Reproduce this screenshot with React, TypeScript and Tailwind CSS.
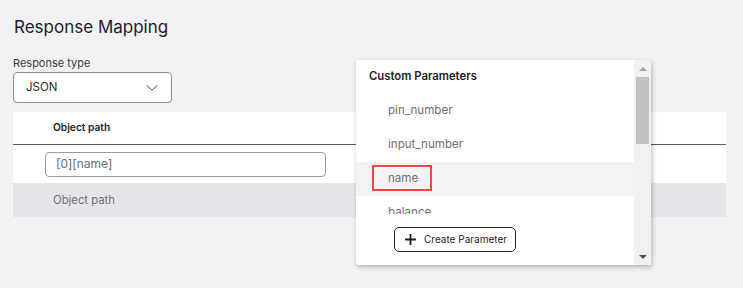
const params = ['pin_number', 'input_number', 'name', 'balance'];

const ParamDropdown = () => {
  return (
    <div className="absolute left-[356px] top-[60px] flex h-[205px] w-[295px] rounded-[3px] bg-white shadow-[1px_2px_5px_rgba(0,0,0,0.28)]">
      <div className="flex flex-1 flex-col">
        <div className="flex h-[34px] items-center pl-[13px] pb-[1px] text-[11.3px] font-semibold text-[#1c1c28]">
          Custom Parameters
        </div>
        <div className="h-[120px] overflow-hidden">
          {params.map(p => (
            <div
              key={p}
              className={`relative flex h-[34px] items-center pl-[32px] text-[11.6px] text-[#6e6e78] ${
                p === 'name' ? 'bg-[#f3f3f4]' : ''
              }`}
            >
              {p}
              {p === 'name' && (
                <div className="absolute left-[16px] top-[3px] h-[26px] w-[60px] border-2 border-[#f24646]" />
              )}
            </div>
          ))}
        </div>
        <div className="flex flex-1 items-center pl-[38px]">
          <button className="flex h-[25px] w-[122px] items-center gap-[8px] rounded-[5px] border border-[#222] bg-white pl-[10px] text-[10px] text-[#1c1c28]">
            <svg width="11" height="11" viewBox="0 0 11 11">
              <path d="M5.5 0v11M0 5.5h11" stroke="#1c1c28" strokeWidth="1.8" />
            </svg>
            Create Parameter
          </button>
        </div>
      </div>
      <div className="flex w-[17px] flex-col items-center bg-[#f1f1f1]">
        <div className="flex h-[17px] items-center justify-center">
          <div className="h-0 w-0 border-x-[4px] border-b-[4px] border-x-transparent border-b-[#a3a3a3]" />
        </div>
        <div className="h-[67px] w-[13px] bg-[#c1c1c1]" />
        <div className="flex-1" />
        <div className="flex h-[17px] items-center justify-center">
          <div className="h-0 w-0 border-x-[4px] border-t-[4px] border-x-transparent border-t-[#505050]" />
        </div>
      </div>
    </div>
  );
};

export default function App() {
  return (
    <div
      className="relative h-[288px] w-[743px] bg-[#f2f2f4] pl-[13px] pt-[15px]"
      style={{ fontFamily: 'Inter, "Noto Sans", sans-serif' }}
    >
      <h1 className="ml-[1px] text-[17px] leading-[24px] text-[#1c1c28]">Response Mapping</h1>
      <div className="mt-[17px] text-[11px] leading-[14px] text-[#3a3a44]">Response type</div>
      <div className="mt-[2px] flex h-[31px] w-[159px] items-center justify-between rounded-[4px] border border-[#8c8c94] bg-white pl-[12px] pr-[13px] text-[11.5px] text-[#2a2a34]">
        JSON
        <svg width="12" height="6" viewBox="0 0 12 6">
          <path d="M0.5 0.5L6 5L11.5 0.5" fill="none" stroke="#555" strokeWidth="1" />
        </svg>
      </div>
      <div className="mt-[9px] w-[713px] bg-white">
        <div className="flex h-[33px] items-center border-b border-[#5c5c64] pl-[40px] text-[10.2px] font-semibold text-[#1c1c28]">
          Object path
        </div>
        <div className="flex h-[38px] items-center pl-[32px]">
          <div className="flex h-[25px] w-[281px] items-center rounded-[4px] border border-[#9a9aa2] pl-[10px] text-[12px] text-[#6e6e78]">
            [0][name]
          </div>
        </div>
        <div className="flex h-[34px] items-center bg-[#e6e6ea] pl-[40px] text-[11.3px] text-[#6e6e78]">
          Object path
        </div>
      </div>
      <ParamDropdown />
    </div>
  );
}
